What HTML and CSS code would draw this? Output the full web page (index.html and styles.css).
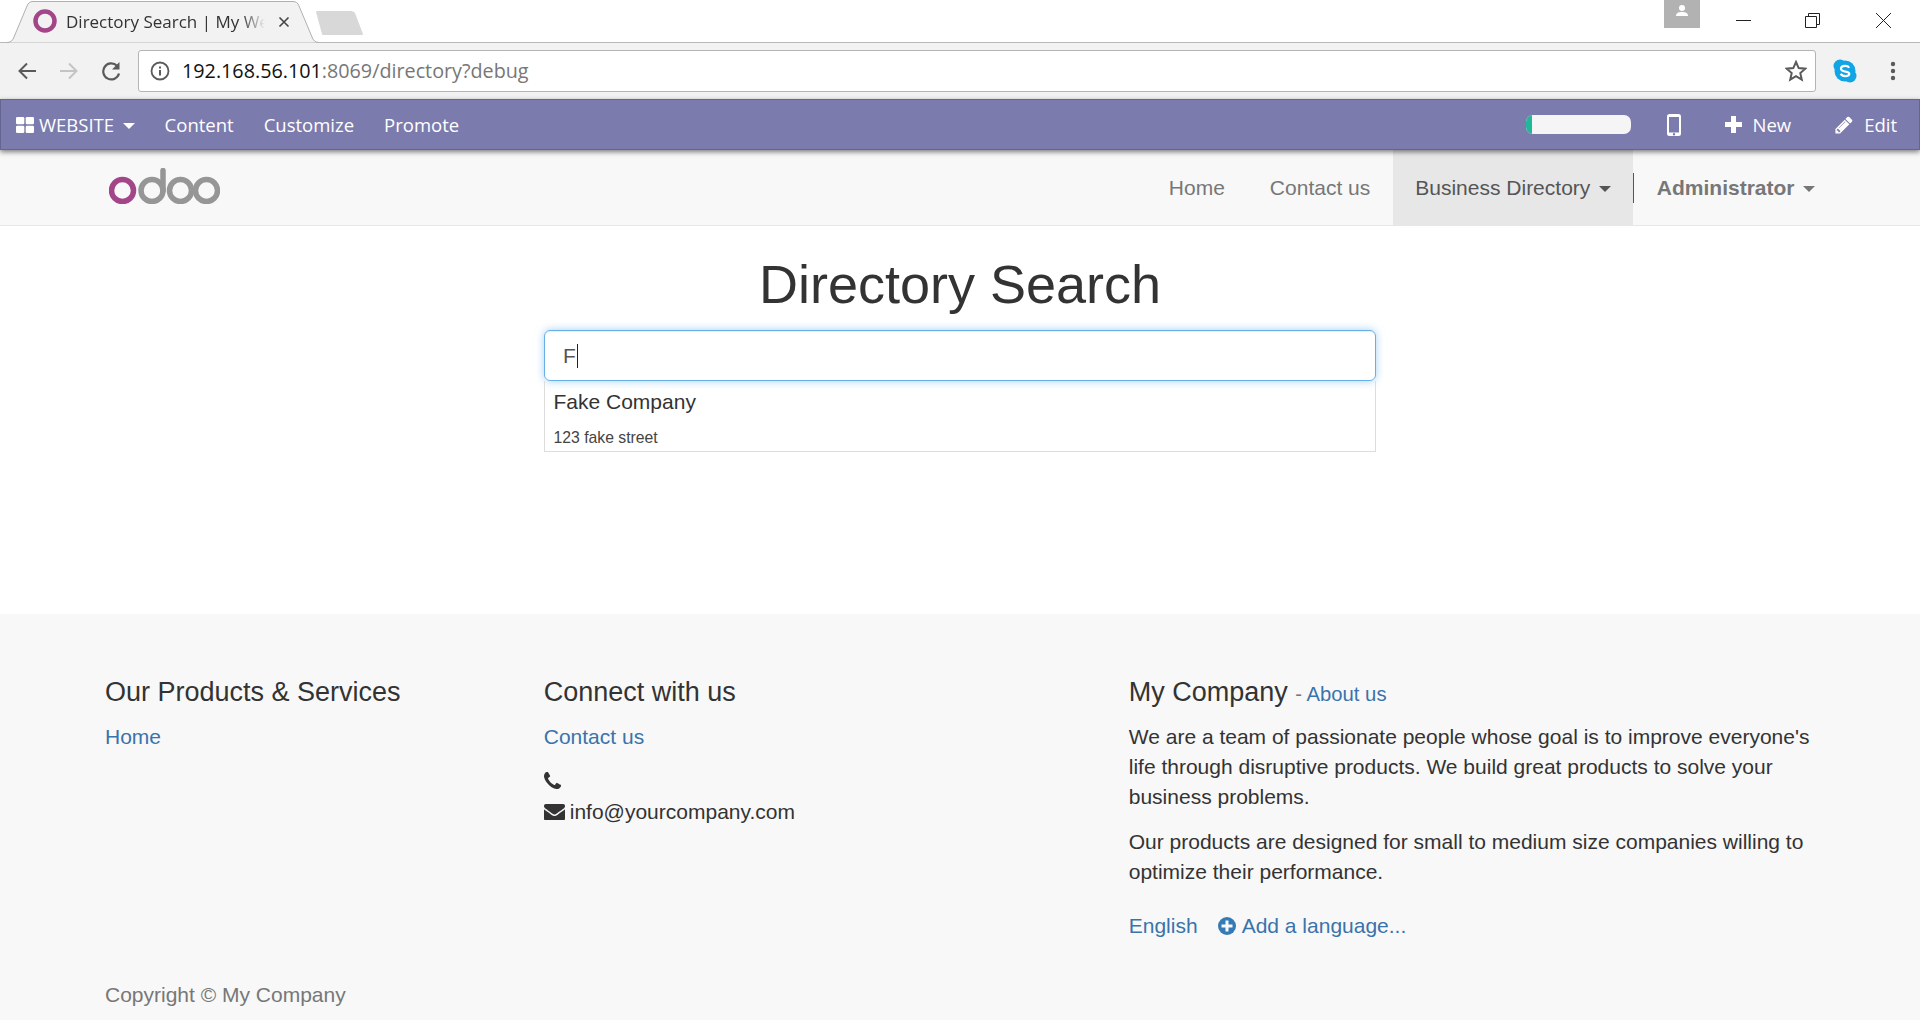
FILE: index.html
```html
<!DOCTYPE html>
<html lang="en">
<head>
    <meta charset="UTF-8">
    <meta name="viewport" content="width=device-width, initial-scale=1.0">
    <title>Directory Search | My Website</title>
    <link rel="stylesheet" href="styles.css">
</head>
<body>

<!-- Browser chrome -->
<div class="tabstrip">
    <div class="tab">
        <svg class="tab-shape" viewBox="0 0 312 43"><path d="M0 42.500 C4 42.500 6 40 7 37 L20 6 C21 3 23 1.500 26 1.500 H286 C289 1.500 291 3 292 6 L305 37 C306 40 308 42.500 312 42.500" fill="#f2f2f2" stroke="#b0b0b0"/></svg>
        <svg class="favicon" viewBox="0 0 24 24"><circle cx="12" cy="12" r="9.500" fill="none" stroke="#a24689" stroke-width="4.500"/></svg>
        <span class="tab-title">Directory Search | My We</span>
        <svg class="tab-close" viewBox="0 0 12 12"><path d="M1.500 1.500l9 9M10.500 1.500l-9 9" stroke="#444" stroke-width="1.600"/></svg>
    </div>
    <svg class="new-tab" viewBox="0 0 49 26"><path d="M1 2 C1 1 2 1 3 1 H36 C38 1 39 2 40 3 L48 24 C48 25 47 25 46 25 H9 C8 25 7 25 7 24 Z" fill="#d8d8d8"/></svg>
    <div class="window-controls">
        <div class="avatar">
            <svg viewBox="0 0 16 16"><circle cx="8" cy="5" r="3" fill="#fff"/><path d="M2 13 C2 9.500 5 9 8 9 S14 9.500 14 13Z" fill="#fff"/></svg>
        </div>
        <svg class="win-min" viewBox="0 0 15 15"><path d="M0 7.500H15" stroke="#222"/></svg>
        <svg class="win-restore" viewBox="0 0 15 15"><path d="M.5 3.500h11v11H.5zM3.500 3.500V.5h11v11h-3" fill="none" stroke="#222"/></svg>
        <svg class="win-close" viewBox="0 0 15 15"><path d="M0 0l15 15M15 0L0 15" stroke="#222"/></svg>
    </div>
</div>

<div class="toolbar">
    <svg class="tool-icon" viewBox="0 0 20 20"><path d="M19 10H2.500M10 2.500L2.500 10l7.500 7.500" fill="none" stroke="#5a5a5a" stroke-width="2"/></svg>
    <svg class="tool-icon" viewBox="0 0 20 20"><path d="M1 10h16.500M10 2.500l7.500 7.500-7.500 7.500" fill="none" stroke="#c4c4c4" stroke-width="2"/></svg>
    <svg class="tool-icon" viewBox="0 0 20 20"><path d="M18 12.500A8 8 0 1 1 16 4.800" fill="none" stroke="#5a5a5a" stroke-width="2.200"/><path d="M18.500 1v7.500h-7.500z" fill="#5a5a5a"/></svg>
    <div class="address-bar">
        <svg class="info-icon" viewBox="0 0 20 20"><circle cx="10" cy="10" r="8.500" fill="none" stroke="#5a5a5a" stroke-width="1.800"/><path d="M10 9v5.500M10 5.500v2" stroke="#5a5a5a" stroke-width="2"/></svg>
        <span class="url-host">192.168.56.101</span><span class="url-rest">:8069/directory?debug</span>
        <svg class="star-icon" viewBox="0 0 22 22"><path d="M11 2l2.700 6.100 6.600.6-5 4.400 1.500 6.500L11 16.200 5.200 19.600l1.500-6.500-5-4.400 6.600-.6z" fill="none" stroke="#5a5a5a" stroke-width="2"/></svg>
    </div>
    <svg class="skype-icon" viewBox="0 0 24 24"><circle cx="7" cy="7" r="6.500" fill="#12a5e6"/><circle cx="17" cy="17" r="6.500" fill="#12a5e6"/><circle cx="12" cy="12" r="10.500" fill="#12a5e6"/><path d="M16.200 8.800C15.300 7.300 13.700 6.900 12 6.900c-2.300 0-4 1.100-4 2.900 0 3.800 8.300 2 8.300 5 0 1.300-1.700 2.300-4.100 2.300-2 0-3.700-.8-4.500-2.400" fill="none" stroke="#fff" stroke-width="2.200"/></svg>
    <svg class="menu-icon" viewBox="0 0 6 20"><circle cx="3" cy="3" r="2.200"/><circle cx="3" cy="10" r="2.200"/><circle cx="3" cy="17" r="2.200"/></svg>
</div>

<!-- Odoo website admin bar -->
<div class="adminbar">
    <div class="admin-left">
        <a class="admin-link admin-apps">
            <svg class="apps-icon" viewBox="0 0 18 16"><rect width="8.300" height="7.300" rx="1.200"/><rect x="9.700" width="8.300" height="7.300" rx="1.200"/><rect y="8.700" width="8.300" height="7.300" rx="1.200"/><rect x="9.700" y="8.700" width="8.300" height="7.300" rx="1.200"/></svg>
            WEBSITE<span class="caret"></span>
        </a>
        <a class="admin-link">Content</a>
        <a class="admin-link">Customize</a>
        <a class="admin-link">Promote</a>
    </div>
    <div class="admin-right">
        <div class="progress"><div class="progress-bar"></div></div>
        <svg class="phone-icon" viewBox="0 0 14 22"><path fill-rule="evenodd" d="M2.500 0h9A2.500 2.500 0 0 1 14 2.500v17a2.500 2.500 0 0 1-2.500 2.500h-9A2.500 2.500 0 0 1 0 19.500v-17A2.500 2.500 0 0 1 2.500 0zM2 3v15.500h10V3zM7 19a1.200 1.200 0 1 0 0 2.400A1.200 1.200 0 0 0 7 19z"/></svg>
        <a class="admin-link admin-new">
            <svg class="plus-icon" viewBox="0 0 17 17"><path d="M6 0h5v6h6v5h-6v6H6v-6H0V6h6z"/></svg>
            New
        </a>
        <a class="admin-link admin-edit">
            <svg class="pencil-icon" viewBox="0 0 1792 1792"><path d="M491 1536l91-91-235-235-91 91v107h128v128h107zm523-928q0-22-22-22-10 0-17 7l-542 542q-7 7-7 17 0 22 22 22 10 0 17-7l542-542q7-7 7-17zm-54-192l416 416-832 832h-416v-416zm683 96q0 53-37 90l-166 166-416-416 166-165q36-38 90-38 53 0 91 38l235 234q37 39 37 91z"/></svg>
            Edit
        </a>
    </div>
</div>

<!-- Site navbar -->
<nav class="navbar">
    <svg class="logo" viewBox="0 0 111 36">
        <circle cx="13.500" cy="22.500" r="11" fill="none" stroke="#a24689" stroke-width="5.500"/>
        <circle cx="43" cy="22.500" r="11" fill="none" stroke="#969696" stroke-width="5.500"/>
        <path d="M54 22.500V2.500" stroke="#969696" stroke-width="5.500" stroke-linecap="round"/>
        <circle cx="71.500" cy="22.500" r="11" fill="none" stroke="#969696" stroke-width="5.500"/>
        <circle cx="97.500" cy="22.500" r="11" fill="none" stroke="#969696" stroke-width="5.500"/>
    </svg>
    <div class="nav-links">
        <a class="nav-link">Home</a>
        <a class="nav-link">Contact us</a>
        <a class="nav-link nav-active">Business Directory<span class="caret"></span></a>
        <div class="nav-divider"></div>
        <a class="nav-link nav-user">Administrator<span class="caret"></span></a>
    </div>
</nav>

<main class="content">
    <h1>Directory Search</h1>
    <div class="search">
        <div class="search-input">F<span class="text-cursor"></span></div>
        <div class="search-results">
            <div class="result-name">Fake Company</div>
            <div class="result-address">123 fake street</div>
        </div>
    </div>
</main>

<footer class="footer">
    <div class="footer-columns">
        <div class="footer-col">
            <h4>Our Products &amp; Services</h4>
            <a class="footer-link">Home</a>
        </div>
        <div class="footer-col">
            <h4>Connect with us</h4>
            <a class="footer-link">Contact us</a>
            <div class="contact-lines">
                <div class="contact-line">
                    <svg class="phone-small" viewBox="0 0 1408 1408"><path d="M1408 1112q0 27-10 70.500t-21 68.500q-21 50-122 106-94 51-186 51-27 0-53-3.500t-57.500-12.500-47-14.500-55.500-20.500-49-18q-98-35-175-83-127-79-264-216t-216-264q-48-77-83-175-3-9-18-49t-20.500-55.500-14.500-47-12.500-57.500-3.500-53q0-92 51-186 56-101 106-122 25-11 68.500-21t70.500-10q14 0 21 3 18 6 53 76 11 19 30 54t35 63.500 31 53.500q3 4 17.500 25t21.500 35.500 7 28.500q0 20-28.500 50t-62 55-62 53-28.500 46q0 9 5 22.500t8.500 20.500 14 24 11.500 19q76 137 174 235t235 174q2 1 19 11.500t24 14 20.500 8.500 22.500 5q18 0 46-28.500t53-62 55-62 50-28.500q14 0 28.500 7t35.500 21.500 25 17.500q25 15 53.500 31t63.500 35 54 30q70 35 76 53 3 7 3 21z"/></svg>
                </div>
                <div class="contact-line">
                    <svg class="mail-icon" viewBox="0 256 1792 1408"><path d="M1792 710v794q0 66-47 113t-113 47h-1472q-66 0-113-47t-47-113v-794q44 49 101 87 362 246 497 345 57 42 92.500 65.500t94.500 48 110 24.500h2q51 0 110-24.500t94.500-48 92.500-65.500q170-123 498-345 57-39 100-87zm0-294q0 79-49 151t-122 123q-376 261-468 325-10 7-42.500 30.500t-54 38-52 32.500-57.500 27-50 9h-2q-23 0-50-9t-57.500-27-52-32.500-54-38-42.500-30.500q-91-64-262-182.500t-205-142.500q-62-42-117-115.500t-55-136.500q0-78 41.500-130t118.500-52h1472q65 0 112.500 47t47.500 113z"/></svg>
                    info@yourcompany.com
                </div>
            </div>
        </div>
        <div class="footer-col">
            <h4 class="about-title">My Company <small>- <a class="footer-link">About us</a></small></h4>
            <p>We are a team of passionate people whose goal is to improve everyone's life through disruptive products. We build great products to solve your business problems.</p>
            <p>Our products are designed for small to medium size companies willing to optimize their performance.</p>
            <div class="languages">
                <a class="footer-link">English</a>
                <a class="footer-link">
                    <svg class="plus-circle" viewBox="0 0 18 18"><circle cx="9" cy="9" r="9"/><path d="M7.500 3.500h3v4h4v3h-4v4h-3v-4h-4v-3h4z" fill="#f8f8f8"/></svg>
                    Add a language...
                </a>
            </div>
        </div>
    </div>
    <div class="copyright">Copyright &copy; My Company</div>
</footer>

</body>
</html>
```

FILE: styles.css
```css
html, body {
    margin: 0;
    padding: 0;
}

body {
    height: 1020px;
    overflow: hidden;
    font-family: 'Liberation Sans', Arial, sans-serif;
    font-size: 21px;
    line-height: 30px;
    color: #333;
    background-color: #fff;
    display: flex;
    flex-direction: column;
}

svg {
    display: block;
    flex: none;
}

/* Browser chrome */
.tabstrip {
    height: 43px;
    box-sizing: border-box;
    border-bottom: 1px solid #b8b8b8;
    display: flex;
    font-family: 'Open Sans', 'Noto Sans', sans-serif;
}

.tab {
    position: relative;
    flex: none;
    width: 312px;
    height: 43px;
    margin-left: 7px;
    display: flex;
    align-items: center;
    font-size: 17px;
    color: #333;
}

.tab-shape {
    position: absolute;
    left: 0;
    top: 0;
    width: 312px;
    height: 43px;
}

.favicon {
    position: relative;
    width: 24px;
    height: 24px;
    margin-left: 26px;
    margin-top: -1px;
}

.tab-title {
    position: relative;
    width: 199px;
    margin-left: 9px;
    white-space: nowrap;
    -webkit-mask-image: linear-gradient(to right, #000 88%, transparent);
    mask-image: linear-gradient(to right, #000 88%, transparent);
}

.tab-close {
    position: relative;
    width: 12px;
    height: 12px;
    margin-left: 13px;
}

.new-tab {
    width: 49px;
    height: 26px;
    margin: 10px 0 0 -4px;
}

.window-controls {
    margin-left: auto;
    display: flex;
    align-items: flex-start;
}

.avatar {
    width: 36px;
    height: 28px;
    background-color: #b2b2b2;
    display: flex;
    justify-content: center;
    padding-top: 3px;
    box-sizing: border-box;
}

.avatar svg {
    width: 16px;
    height: 16px;
}

.win-min, .win-restore, .win-close {
    width: 15px;
    height: 15px;
    margin-top: 13px;
}

.win-min {
    margin-left: 36px;
}

.win-restore {
    margin-left: 54px;
}

.win-close {
    margin-left: 56px;
    margin-right: 29px;
}

.toolbar {
    height: 56px;
    background-color: #f2f2f2;
    display: flex;
    align-items: center;
    padding-left: 17px;
    box-sizing: border-box;
    font-family: 'Open Sans', 'Noto Sans', sans-serif;
}

.tool-icon {
    width: 20px;
    height: 20px;
    margin-right: 22px;
}

.address-bar {
    width: 1678px;
    height: 42px;
    box-sizing: border-box;
    margin-left: -5px;
    background-color: #fff;
    border: 1px solid #b4b4b4;
    border-radius: 3px;
    display: flex;
    align-items: center;
    font-size: 19.75px;
    padding-left: 11px;
}

.info-icon {
    width: 20px;
    height: 20px;
    margin-right: 12px;
}

.url-host {
    color: #111;
}

.url-rest {
    color: #777;
}

.star-icon {
    width: 22px;
    height: 22px;
    margin-left: auto;
    margin-right: 8px;
}

.skype-icon {
    width: 24px;
    height: 24px;
    margin-left: 17px;
}

.menu-icon {
    width: 6px;
    height: 20px;
    fill: #5a5a5a;
    margin-left: 33px;
}

/* Admin bar */
.adminbar {
    height: 51px;
    background-color: #7c7bad;
    box-sizing: border-box;
    border: 1px solid #66658f;
    box-shadow: 0 2px 5px rgba(0, 0, 0, 0.5);
    position: relative;
    display: flex;
    justify-content: space-between;
    align-items: center;
    color: #fff;
    font-family: 'Open Sans', 'Noto Sans', sans-serif;
    font-size: 18.500px;
}

.admin-left, .admin-right, .admin-link {
    display: flex;
    align-items: center;
}

.admin-left {
    padding-left: 15px;
}

.admin-link {
    margin-right: 30px;
}

.apps-icon {
    width: 18px;
    height: 16px;
    fill: #fff;
    margin-right: 5px;
}

.adminbar .caret {
    border-top-color: #fff;
}

.admin-right {
    padding-right: 22px;
}

.progress {
    width: 105px;
    height: 19px;
    background-color: #f5f5f5;
    border-radius: 7px;
    overflow: hidden;
}

.progress-bar {
    width: 6px;
    height: 100%;
    background-color: #21b799;
}

.phone-icon {
    width: 14px;
    height: 22px;
    fill: #fff;
    margin: 0 44px 0 36px;
}

.plus-icon {
    width: 17px;
    height: 17px;
    fill: #fff;
    margin-right: 10px;
}

.pencil-icon {
    width: 20px;
    height: 20px;
    fill: #fff;
    margin-right: 10px;
}

.admin-new {
    margin-right: 43px;
}

.admin-edit {
    margin-right: 0;
}

/* Site navbar */
.navbar {
    height: 75px;
    background-color: #f8f8f8;
    border-bottom: 1px solid #e7e7e7;
    box-sizing: content-box;
    display: flex;
    justify-content: space-between;
    padding: 0 82.5px 0 109px;
}

.logo {
    width: 111px;
    height: 36px;
    margin-top: 18px;
}

.nav-links {
    display: flex;
    align-items: stretch;
}

.nav-link {
    display: flex;
    align-items: center;
    padding: 0 22.5px;
    color: #777;
}

.nav-active {
    background-color: #e7e7e7;
    color: #555;
}

.nav-divider {
    width: 1px;
    height: 30px;
    background-color: #555;
    margin-top: 23px;
}

.nav-user {
    font-weight: bold;
    color: #777;
}

.caret {
    display: inline-block;
    width: 0;
    height: 0;
    margin-left: 8.500px;
    margin-top: 3px;
    border-top: 6px solid currentColor;
    border-left: 6px solid transparent;
    border-right: 6px solid transparent;
}

/* Search */
.content {
    height: 388px;
    box-sizing: border-box;
    padding-top: 28px;
}

h1 {
    margin: 0;
    font-size: 54px;
    font-weight: normal;
    line-height: 60px;
    text-align: center;
    color: #333;
}

.search {
    width: 832px;
    margin: 16px auto 0;
}

.search-input {
    height: 51px;
    box-sizing: border-box;
    border: 1px solid #66afe9;
    border-radius: 6px;
    box-shadow: inset 0 1px 1px rgba(0, 0, 0, 0.075), 0 0 8px rgba(102, 175, 233, 0.6);
    padding: 0 18px;
    display: flex;
    align-items: center;
    color: #555;
}

.text-cursor {
    width: 1px;
    height: 24px;
    background-color: #222;
    margin-left: 1px;
}

.search-results {
    height: 71px;
    box-sizing: border-box;
    border: 1px solid #ddd;
    border-top: none;
    padding: 6px 8.500px 0;
}

.result-name {
    line-height: 30px;
}

.result-address {
    font-size: 15.750px;
    line-height: 22px;
    margin-top: 10px;
    color: #444;
}

/* Footer */
.footer {
    flex: 1;
    background-color: #f8f8f8;
    padding: 0 82.5px;
    color: #333;
}

.footer-columns {
    display: grid;
    grid-template-columns: 3fr 4fr 5fr;
    padding-top: 62px;
}

.footer-col {
    padding: 0 22.5px;
}

h4 {
    margin: 0 0 13px;
    font-size: 27px;
    font-weight: normal;
    line-height: 33px;
}

h4.about-title {
    margin-bottom: 11px;
}

h4 small {
    font-size: 20.250px;
    color: #777;
}

.footer-link {
    color: #3a73ab;
}

.contact-lines {
    margin-top: 12px;
}

.contact-line {
    display: flex;
    align-items: center;
    gap: 5px;
    height: 32px;
}

.phone-small {
    width: 17px;
    height: 17px;
    fill: #333;
}

.mail-icon {
    width: 21px;
    height: 16.500px;
    fill: #333;
}

p {
    margin: 0 0 15px;
}

.languages {
    margin-top: 24px;
    display: flex;
    gap: 20px;
}

.languages .footer-link {
    display: flex;
    align-items: center;
    gap: 6px;
}

.plus-circle {
    width: 18px;
    height: 18px;
    fill: #337ab7;
}

.copyright {
    margin: 39px 22.5px 0;
    color: #777;
}
```
